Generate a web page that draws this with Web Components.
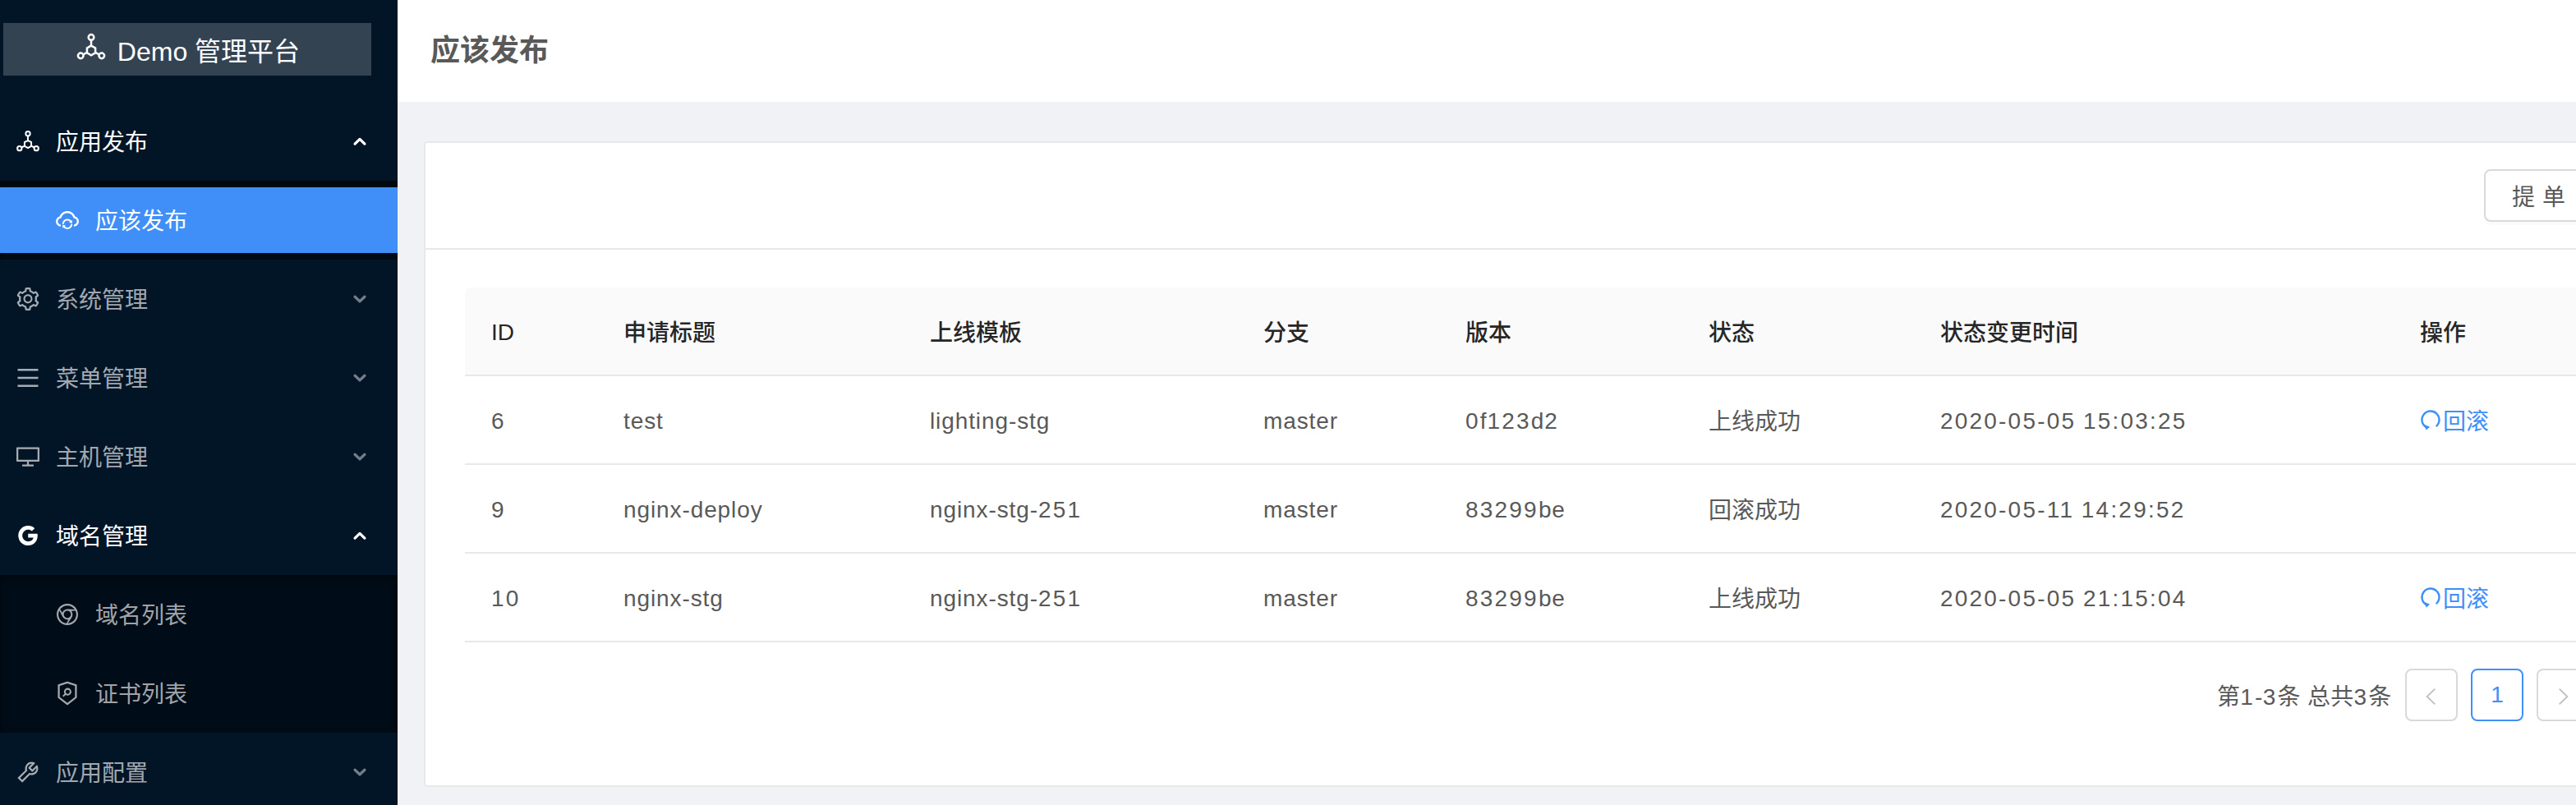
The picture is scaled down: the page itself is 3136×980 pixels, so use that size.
<!DOCTYPE html>
<html lang="zh">
<head>
<meta charset="utf-8">
<title>应该发布</title>
<style>
  html, body { margin: 0; height: 100%; overflow: hidden; }
  body { font-family: "Liberation Sans", "Noto Sans CJK SC", sans-serif; }
</style>
</head>
<body>
<app-shell>
  <side-menu slot="side">
    <side-logo></side-logo>
    <menu-row icon="deploy" open active>应用发布</menu-row>
    <menu-group>
      <menu-row icon="cloud" sub selected>应该发布</menu-row>
    </menu-group>
    <menu-row icon="setting">系统管理</menu-row>
    <menu-row icon="menu">菜单管理</menu-row>
    <menu-row icon="desktop">主机管理</menu-row>
    <menu-row icon="google" open active>域名管理</menu-row>
    <menu-group>
      <menu-row icon="chrome" sub>域名列表</menu-row>
      <menu-row icon="shield" sub>证书列表</menu-row>
    </menu-group>
    <menu-row icon="tool">应用配置</menu-row>
  </side-menu>
  <page-head slot="head">应该发布</page-head>
  <release-card slot="body"></release-card>
</app-shell>

<script>
const ICONS = {
  deploy: '<g fill="none" stroke="currentColor" stroke-width="64"><circle cx="512" cy="215" r="85"/><circle cx="185" cy="790" r="85"/><circle cx="839" cy="790" r="85"/><path d="M512 300v175M262 752l120-62M762 752l-120-62M512 475l130 75v150l-130 75-130-75V550z"/></g>',
  cloud: '<path fill="currentColor" d="M811.4 368.9C765.6 248 648.9 162 512.2 162S258.8 247.9 213 368.8C126.9 391.5 63.5 470.2 64 563.6 64.6 668 145.6 752.9 247.6 762c4.7.4 8.7-3.3 8.7-8v-60.4c0-4-3-7.4-7-7.9-27-3.4-52.5-15.2-72.1-34.5-24-23.5-37.2-55.1-37.2-88.6 0-28 9.1-54.4 26.2-76.4 16.7-21.4 40.2-36.9 66.1-43.7l37.9-10 13.9-36.7c8.6-22.8 20.6-44.2 35.7-63.5 14.9-19.2 32.6-36 52.4-50 41.1-28.9 89.5-44.2 140-44.2s98.9 15.3 140 44.3c19.9 14 37.5 30.8 52.4 50 15.1 19.3 27.1 40.7 35.7 63.5l13.8 36.6 37.8 10c54.2 14.4 92.1 63.7 92.1 120 0 33.6-13.2 65.1-37.2 88.6-19.5 19.2-44.9 31.1-71.9 34.5-4 .5-6.9 3.9-6.9 7.9V754c0 4.7 4.1 8.4 8.8 8 101.7-9.2 182.5-94 183.2-198.2.6-93.4-62.7-172.1-148.6-194.9z"/><path fill="currentColor" d="M376.9 656.4c1.8-33.5 15.7-64.7 39.5-88.6 25.4-25.5 60-39.8 96-39.8 36.2 0 70.3 14.1 96 39.8 1.4 1.4 2.7 2.8 4.1 4.3l-25 19.6a8 8 0 0 0 3 14.1l98.2 24c5 1.2 9.9-2.6 9.9-7.7l.5-101.3c0-6.7-7.6-10.5-12.9-6.3L663 532.7c-36.6-42-90.4-68.6-150.5-68.6-107.4 0-195 85.1-199 191.7-.2 4.5 3.4 8.3 8 8.3H369c4.2-.1 7.7-3.4 7.9-7.7zM703 664h-47.9c-4.2 0-7.7 3.3-8 7.6-1.8 33.5-15.7 64.7-39.5 88.6-25.4 25.5-60 39.8-96 39.8-36.2 0-70.3-14.1-96-39.8-1.4-1.4-2.7-2.8-4.1-4.3l25-19.6a8 8 0 0 0-3-14.1l-98.2-24c-5-1.2-9.9 2.6-9.9 7.7l-.4 101.4c0 6.7 7.6 10.5 12.9 6.3l23.2-18.2c36.6 42 90.4 68.6 150.5 68.6 107.4 0 195-85.1 199-191.7.2-4.5-3.4-8.3-8-8.3z"/>',
  setting: '<path fill="currentColor" d="M924.8 625.7l-65.5-56c3.1-19 4.7-38.4 4.7-57.8s-1.6-38.8-4.7-57.8l65.5-56a32.03 32.03 0 0 0 9.3-35.2l-.9-2.6a443.74 443.74 0 0 0-79.7-137.9l-1.8-2.1a32.12 32.12 0 0 0-35.1-9.5l-81.3 28.9c-30-24.6-63.5-44-99.7-57.6l-15.7-85a32.05 32.05 0 0 0-25.8-25.7l-2.7-.5c-52.1-9.4-106.9-9.4-159 0l-2.7.5a32.05 32.05 0 0 0-25.8 25.7l-15.8 85.4a351.86 351.86 0 0 0-99 57.4l-81.9-29.1a32 32 0 0 0-35.1 9.5l-1.8 2.1a446.02 446.02 0 0 0-79.7 137.9l-.9 2.6c-4.5 12.5-.8 26.5 9.3 35.2l66.3 56.6c-3.1 18.8-4.6 38-4.6 57.1 0 19.2 1.5 38.4 4.6 57.1L99 625.5a32.03 32.03 0 0 0-9.3 35.2l.9 2.6c18.1 50.4 44.9 96.9 79.7 137.9l1.8 2.1a32.12 32.12 0 0 0 35.1 9.5l81.9-29.1c29.8 24.5 63.1 43.9 99 57.4l15.8 85.4a32.05 32.05 0 0 0 25.8 25.7l2.7.5a449.4 449.4 0 0 0 159 0l2.7-.5a32.05 32.05 0 0 0 25.8-25.7l15.7-85a350 350 0 0 0 99.7-57.6l81.3 28.9a32 32 0 0 0 35.1-9.5l1.8-2.1c34.8-41.1 61.6-87.5 79.7-137.9l.9-2.6c4.5-12.3.8-26.3-9.3-35zM788.3 465.9c2.5 15.1 3.8 30.6 3.8 46.1s-1.3 31-3.8 46.1l-6.6 40.1 74.7 63.9a370.03 370.03 0 0 1-42.6 73.6L721 702.8l-31.4 25.8c-23.9 19.6-50.5 35-79.3 45.8l-38.1 14.3-17.9 97a377.5 377.5 0 0 1-85 0l-17.9-97.2-37.8-14.5c-28.5-10.8-55-26.2-78.7-45.7l-31.4-25.9-93.4 33.2c-17-22.9-31.2-47.6-42.6-73.6l75.5-64.5-6.5-40c-2.4-14.9-3.7-30.3-3.7-45.5 0-15.3 1.2-30.6 3.7-45.5l6.5-40-75.5-64.5c11.3-26.1 25.6-50.7 42.6-73.6l93.4 33.2 31.4-25.9c23.7-19.5 50.2-34.9 78.7-45.7l37.9-14.3 17.9-97.2c28.1-3.2 56.8-3.2 85 0l17.9 97 38.1 14.3c28.7 10.8 55.4 26.2 79.3 45.8l31.4 25.8 92.8-32.9c17 22.9 31.2 47.6 42.6 73.6L781.8 426l6.5 39.9zM512 326c-97.2 0-176 78.8-176 176s78.8 176 176 176 176-78.8 176-176-78.8-176-176-176zm79.2 255.2A111.6 111.6 0 0 1 512 614c-29.9 0-58-11.7-79.2-32.8A111.6 111.6 0 0 1 400 502c0-29.9 11.7-58 32.8-79.2C454 401.6 482.1 390 512 390c29.9 0 58 11.6 79.2 32.8A111.6 111.6 0 0 1 624 502c0 29.9-11.7 58-32.8 79.2z"/>',
  menu: '<path fill="currentColor" d="M904 160H120c-4.4 0-8 3.6-8 8v64c0 4.4 3.6 8 8 8h784c4.4 0 8-3.6 8-8v-64c0-4.4-3.6-8-8-8zm0 624H120c-4.4 0-8 3.6-8 8v64c0 4.4 3.6 8 8 8h784c4.4 0 8-3.6 8-8v-64c0-4.4-3.6-8-8-8zm0-312H120c-4.4 0-8 3.6-8 8v64c0 4.4 3.6 8 8 8h784c4.4 0 8-3.6 8-8v-64c0-4.4-3.6-8-8-8z"/>',
  desktop: '<path fill="currentColor" d="M928 140H96c-17.7 0-32 14.3-32 32v496c0 17.7 14.3 32 32 32h380v112H304c-8.8 0-16 7.2-16 16v48c0 4.4 3.6 8 8 8h432c4.4 0 8-3.6 8-8v-48c0-8.8-7.2-16-16-16H548V700h380c17.7 0 32-14.3 32-32V172c0-17.7-14.3-32-32-32zm-40 488H136V212h752v416z"/>',
  google: '<path fill="currentColor" d="M881 442.4H519.7v148.5h206.4c-8.9 48-35.9 88.6-76.6 115.8-34.4 23-78.3 36.6-129.9 36.6-99.9 0-184.4-67.5-214.6-158.2-7.6-23-12-47.6-12-72.9s4.4-49.9 12-72.9c30.3-90.6 114.8-158.1 214.7-158.1 56.3 0 106.8 19.4 146.6 57.4l110-110.1c-66.5-62-153.2-100-256.6-100-149.9 0-279.6 86-342.7 211.4-26 51.8-40.8 110.4-40.8 172.4S151 632.8 177 684.6C240.1 810 369.8 896 519.7 896c103.6 0 190.4-34.4 253.8-93 72.5-66.8 114.4-165.2 114.4-282.1 0-27.2-2.4-53.3-7-78.5z"/>',
  chrome: '<path fill="currentColor" d="M928 512.3v-.3c0-229.8-186.2-416-416-416S96 282.2 96 512v.4c0 229.8 186.2 416 416 416s416-186.2 416-416v-.3.2zm-6.7-74.6l.6 3.3-.6-3.3zM676.7 638.2c53.5-82.2 52.5-189.4-11.1-263.7l162.4-8.4c20.5 44.4 32 93.8 32 145.9 0 185.2-144.6 336.6-327.1 347.4l143.8-221.2zM512 652.3c-77.5 0-140.2-62.7-140.2-140.2 0-77.7 62.7-140.2 140.2-140.2S652.2 434.5 652.2 512 589.5 652.3 512 652.3zm369.2-331.7l-3-5.7 3 5.7zM512 164c121.3 0 228.2 62.1 290.4 156.2l-263.6-13.9c-97.5-5.7-190.2 49.2-222.3 141.1L227.8 311c63.1-88.9 166.9-147 284.2-147zM102.5 585.8c26 145 127.1 264 261.6 315.1C229.6 850 128.5 731 102.5 585.8zM164 512c0-55.9 13.2-108.7 36.6-155.5l119.7 235.4c44.1 86.5 137.4 139.1 234.8 121.6l-74 145.1C302.9 842.5 164 693.5 164 512zm324.7 415.4c4 .2 8 .4 12.1.5-4.1-.1-8.1-.3-12.1-.5z"/>',
  shield: '<path fill="currentColor" d="M866.9 169.9L527.1 54.1C523 52.7 517.5 52 512 52s-11 .7-15.1 2.1L157.1 169.9c-8.3 2.8-15.1 12.4-15.1 21.2v482.4c0 8.8 5.7 20.4 12.6 25.9L499.3 968c3.5 2.7 8 4.1 12.6 4.1s9.2-1.4 12.6-4.1l344.7-268.6c6.9-5.4 12.6-17 12.6-25.9V191.1c.2-8.8-6.6-18.3-14.9-21.2zM810 654.3L512 886.5 214 654.3V226.7l298-101.6 298 101.6v427.6zM402.9 528.8l-77.5 77.5a8.03 8.03 0 0 0 0 11.3l34 34c3.1 3.1 8.2 3.1 11.3 0l77.5-77.5c55.7 35.1 130.1 28.4 178.6-20.1 56.3-56.3 56.3-147.5 0-203.8-56.3-56.3-147.5-56.3-203.8 0-48.5 48.5-55.2 123-20.1 178.6zm65.4-133.3c31.3-31.3 82-31.3 113.2 0 31.3 31.3 31.3 82 0 113.2-31.3 31.3-82 31.3-113.2 0s-31.3-82 0-113.2z"/>',
  tool: '<path fill="currentColor" d="M876.6 239.5c-.5-.9-1.2-1.8-2-2.5-5-5-13.1-5-18.1 0L684.2 409.3l-67.9-67.9L788.7 169c.8-.8 1.4-1.6 2-2.5 3.6-6.1 1.6-13.9-4.5-17.5-98.2-58-226.8-44.7-311.3 39.7-67 67-89.2 162-66.5 247.4l-293 293c-3 3-2.8 7.9.3 11l169.7 169.7c3.1 3.1 8.1 3.3 11 .3l292.9-292.9c85.5 22.8 180.5.7 247.6-66.4 84.4-84.5 97.7-213.1 39.7-311.3zM786 499.8c-58.1 58.1-145.3 69.3-214.6 33.6l-8.8 8.8-.1-.1-274 274.1-79.2-79.2 230.1-230.1s0 .1.1.1l52.8-52.8c-35.7-69.3-24.5-156.5 33.6-214.6a184.2 184.2 0 0 1 144-53.5L537 318.9a32.05 32.05 0 0 0 0 45.3l124.5 124.5a32.05 32.05 0 0 0 45.3 0l132.8-132.8c3.7 51.8-14.4 104.8-53.6 143.9z"/>',
  up: '<path fill="none" stroke="currentColor" stroke-width="170" stroke-linecap="round" stroke-linejoin="round" d="M210 670L512 380l302 290"/>',
  down: '<path fill="none" stroke="currentColor" stroke-width="170" stroke-linecap="round" stroke-linejoin="round" d="M210 370L512 660l302-290"/>',
  left: '<path fill="none" stroke="currentColor" stroke-width="70" d="M680 140L300 512l380 372"/>',
  right: '<path fill="none" stroke="currentColor" stroke-width="70" d="M344 140L724 512 344 884"/>',
  undo: '<path fill="none" stroke="currentColor" stroke-width="95" d="M778 829A414 414 0 1 0 300 870"/><path fill="currentColor" d="M200 740L480 860 300 1000z"/>'
};

function svg(name, size) {
  return `<svg viewBox="0 0 1024 1024" width="${size}" height="${size}" aria-hidden="true">${ICONS[name]}</svg>`;
}

// digits sit wider than the letters in the table
function spaced(text) {
  return text.replace(/\d[\d:-]*/g, m => `<span class="d">${m}</span>`);
}

const hasCjk = t => /[\u4e00-\u9fff]/.test(t);

class AppShell extends HTMLElement {
  constructor() {
    super();
    this.attachShadow({ mode: 'open' }).innerHTML = `
      <style>
        :host { display: grid; grid-template-columns: 484px 1fr; grid-template-rows: 124px 1fr; width: 3136px; height: 980px; overflow: hidden; background: #f0f2f5; }
        .side { grid-row: 1 / 3; }
        .main { min-width: 0; overflow: hidden; }
      </style>
      <div class="side"><slot name="side"></slot></div>
      <slot name="head"></slot>
      <div class="main"><slot name="body"></slot></div>`;
  }
}

class SideMenu extends HTMLElement {
  constructor() {
    super();
    this.attachShadow({ mode: 'open' }).innerHTML = `
      <style>
        :host { display: block; height: 980px; overflow: hidden; background: #021527; }
      </style>
      <slot></slot>`;
  }
}

class SideLogo extends HTMLElement {
  constructor() {
    super();
    this.attachShadow({ mode: 'open' }).innerHTML = `
      <style>
        :host { display: block; height: 124px; box-sizing: border-box; padding: 28px 32px 32px 4px; }
        .box { height: 64px; background: rgba(255,255,255,.2); color: #fff; display: flex; align-items: center; justify-content: center; gap: 12px; font-size: 32px; }
        svg { display: block; margin-top: -6px; }
      </style>
      <div class="box">${svg('deploy', 40)}<span>Demo 管理平台</span></div>`;
  }
}

class MenuGroup extends HTMLElement {
  constructor() {
    super();
    this.attachShadow({ mode: 'open' }).innerHTML = `
      <style>
        :host { display: block; background: #000c17; box-shadow: inset 0 4px 8px rgba(0,0,0,.45); }
      </style>
      <slot></slot>`;
  }
}

class MenuRow extends HTMLElement {
  connectedCallback() {
    if (this.shadowRoot) return;
    const icon = this.getAttribute('icon');
    const sub = this.hasAttribute('sub');
    const arrow = sub ? '' : `<span class="arrow">${svg(this.hasAttribute('open') ? 'up' : 'down', 20)}</span>`;
    this.attachShadow({ mode: 'open' }).innerHTML = `
      <style>
        :host { display: block; padding: 8px 0; font-size: 28px; }
        .row { height: 80px; display: flex; align-items: center; padding-left: ${sub ? 66 : 18}px; padding-right: 36px; color: rgba(255,255,255,.65); }
        :host([active]) .row, :host([selected]) .row { color: #fff; }
        :host([selected]) .row { background: #408ff8; }
        .ico { display: block; width: 32px; height: 32px; margin-right: 18px; }
        svg { display: block; }
        .label { flex: 1; padding-bottom: 3px; }
        .arrow { color: rgba(255,255,255,.45); }
        :host([active]) .arrow { color: #fff; }
      </style>
      <div class="row"><span class="ico">${svg(icon, 32)}</span><span class="label"><slot></slot></span>${arrow}</div>`;
  }
}

class PageHead extends HTMLElement {
  constructor() {
    super();
    this.attachShadow({ mode: 'open' }).innerHTML = `
      <style>
        :host { display: flex; align-items: center; background: #fff; padding: 0 0 8px 40px; font-size: 36px; font-weight: 700; color: #595959; }
      </style>
      <slot></slot>`;
  }
}

const COLS = [161, 373, 406, 246, 296, 282, 584, 400];
const HEAD = ['ID', '申请标题', '上线模板', '分支', '版本', '状态', '状态变更时间', '操作'];
const ROWS = [
  ['6', 'test', 'lighting-stg', 'master', '0f123d2', '上线成功', '2020-05-05 15:03:25', true],
  ['9', 'nginx-deploy', 'nginx-stg-251', 'master', '83299be', '回滚成功', '2020-05-11 14:29:52', false],
  ['10', 'nginx-stg', 'nginx-stg-251', 'master', '83299be', '上线成功', '2020-05-05 21:15:04', true]
];

class ReleaseCard extends HTMLElement {
  constructor() {
    super();
    const grid = COLS.map(w => w + 'px').join(' ');
    const head = HEAD.map(t => `<div class="c${hasCjk(t) ? '' : ' latin'}">${t}</div>`).join('');
    const rows = ROWS.map(r => {
      const cells = r.slice(0, 7).map(t => `<div class="c${hasCjk(t) ? '' : ' val latin'}">${spaced(t)}</div>`).join('');
      const action = r[7] ? `<a class="link">${svg('undo', 26)}<span>回滚</span></a>` : '';
      return `<div class="tr">${cells}<div class="c">${action}</div></div>`;
    }).join('');
    this.attachShadow({ mode: 'open' }).innerHTML = `
      <style>
        :host { display: block; padding: 48px 0 0 32px; }
        .card { width: 2800px; height: 786px; box-sizing: border-box; background: #fff; border: 2px solid #e8e8e8; border-radius: 4px; }
        .top { height: 130px; box-sizing: border-box; border-bottom: 2px solid #e8e8e8; padding: 32px 0 0 2506px; }
        .btn { width: 160px; height: 64px; box-sizing: border-box; border: 2px solid #d9d9d9; border-radius: 8px; color: #595959; font-size: 28px; letter-spacing: 9px; display: flex; align-items: center; padding-left: 32px; box-shadow: 0 4px 0 rgba(0,0,0,.015); }
        .wrap { padding: 46px 0 0 48px; }
        .tr, .th { display: grid; grid-template-columns: ${grid}; align-items: center; border-bottom: 2px solid #e8e8e8; }
        .th { height: 108px; box-sizing: border-box; background: #fafafa; color: #262626; font-weight: 500; border-radius: 8px 8px 0 0; }
        .tr { height: 108px; box-sizing: border-box; color: #595959; }
        .c { padding-left: 32px; font-size: 28px; white-space: nowrap; }
        .latin { padding-top: 4px; }
        .val { letter-spacing: .9px; }
        .d { letter-spacing: 2.2px; }
        .link { color: #408ff8; display: inline-flex; align-items: center; gap: 2px; }
        .link svg { display: block; }
        .pager { display: flex; align-items: center; padding: 32px 0 0 2133px; color: #595959; font-size: 28px; }
        .total { margin-right: 16px; width: 213px; white-space: nowrap; letter-spacing: .3px; }
        .pg { width: 64px; height: 64px; flex: none; box-sizing: border-box; border: 2px solid #d9d9d9; border-radius: 8px; display: flex; align-items: center; justify-content: center; color: #bfbfbf; margin-right: 16px; }
        .pg svg { display: block; margin-top: 4px; }
        .pg.on { border-color: #408ff8; color: #408ff8; }
      </style>
      <div class="card">
        <div class="top"><div class="btn">提单</div></div>
        <div class="wrap">
          <div class="th">${head}</div>
          ${rows}
          <div class="pager">
            <span class="total">第<span class="d">1</span>-<span class="d">3</span>条 总共<span class="d">3</span>条</span>
            <div class="pg">${svg('left', 26)}</div>
            <div class="pg on">1</div>
            <div class="pg">${svg('right', 26)}</div>
          </div>
        </div>
      </div>`;
  }
}

customElements.define('app-shell', AppShell);
customElements.define('side-menu', SideMenu);
customElements.define('side-logo', SideLogo);
customElements.define('menu-group', MenuGroup);
customElements.define('menu-row', MenuRow);
customElements.define('page-head', PageHead);
customElements.define('release-card', ReleaseCard);
</script>
</body>
</html>
